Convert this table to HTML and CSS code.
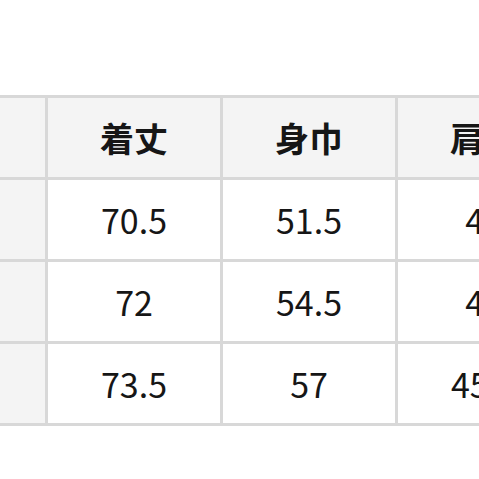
FILE: index.html
```html
<!DOCTYPE html>
<html lang="ja">
<head>
<meta charset="utf-8">
<link rel="stylesheet" href="styles.css">
</head>
<body>
<div class="page">
  <div class="size-table">
    <div class="cell head side"></div>
    <div class="cell head">着丈</div>
    <div class="cell head">身巾</div>
    <div class="cell head">肩幅</div>

    <div class="cell side"></div>
    <div class="cell">70.5</div>
    <div class="cell">51.5</div>
    <div class="cell">43</div>

    <div class="cell side"></div>
    <div class="cell">72</div>
    <div class="cell">54.5</div>
    <div class="cell">44</div>

    <div class="cell side"></div>
    <div class="cell">73.5</div>
    <div class="cell">57</div>
    <div class="cell">45.5</div>
  </div>
</div>
</body>
</html>
```

FILE: styles.css
```css
html, body {
  margin: 0;
  padding: 0;
  background: #ffffff;
}

.page {
  width: 479px;
  height: 479px;
  overflow: hidden;
  padding-top: 95px;
  box-sizing: border-box;
}

.size-table {
  display: grid;
  grid-template-columns: repeat(4, 172px);
  grid-auto-rows: 79px;
  gap: 3px;
  padding: 3px;
  background: #d8d8d8;
  width: max-content;
  margin-left: -130px;
  font-family: "Noto Sans CJK JP", "Noto Sans", sans-serif;
  color: #161616;
}

.cell {
  background: #ffffff;
  display: flex;
  align-items: center;
  justify-content: center;
  font-size: 34px;
  line-height: 1;
}

.head {
  background: #f4f4f4;
  font-weight: 700;
}

.side {
  background: #f4f4f4;
}
```
